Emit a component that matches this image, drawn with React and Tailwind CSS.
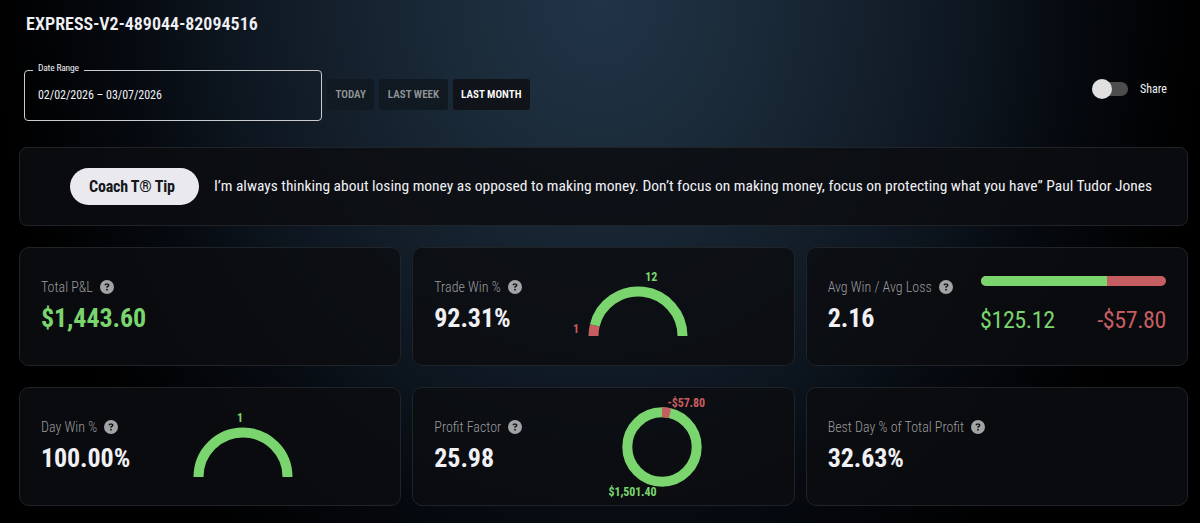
import React from 'react';
import { FaCircleQuestion } from 'react-icons/fa6';

const GREEN = '#7bd56f';
const RED = '#c65d61';

const Card = ({ children }) => (
  <div className="flex h-[119px] rounded-[10px] border border-[#202328] bg-[#0c0d10]/85 pl-[21px] pr-[21px]">
    {children}
  </div>
);

const Stat = ({ label, value, className = 'text-[#f0f0f5]' }) => (
  <div className="shrink-0 pt-[29px]">
    <div className="flex h-5 items-center gap-[7px]">
      <span className="whitespace-nowrap text-[14px] font-light text-[#9a9b9e]">{label}</span>
      <FaCircleQuestion className="h-[14px] w-[14px] text-[#a2a3a4]" />
    </div>
    <div className={`mt-1 text-[26px] font-bold leading-[34px] tracking-[-0.1px] ${className}`}>{value}</div>
  </div>
);

const point = (cx, cy, r, deg) => {
  const a = (deg * Math.PI) / 180;
  return `${cx - r * Math.cos(a)} ${cy - r * Math.sin(a)}`;
};

// half ring, losses first from the left
const Gauge = ({ wins, losses }) => {
  const split = (losses / (wins + losses)) * 180;
  const cx = 70;
  const cy = 70;
  const mid = split + (180 - split) / 2;
  const rad = (mid * Math.PI) / 180;
  return (
    <svg width="140" height="74" className="shrink-0 text-[12px] font-bold">
      {losses > 0 && (
        <path d={`M${point(cx, cy, 44.5, 0)}A44.5 44.5 0 0 1 ${point(cx, cy, 44.5, split)}`} stroke={RED} strokeWidth="10" fill="none" />
      )}
      <path d={`M${point(cx, cy, 44.5, split)}A44.5 44.5 0 0 1 ${point(cx, cy, 44.5, 180)}`} stroke={GREEN} strokeWidth="10" fill="none" />
      <text x={cx - 60 * Math.cos(rad) + (losses ? 6 : -3)} y="15" textAnchor="middle" fill={GREEN}>{wins}</text>
      {losses > 0 && <text x="8" y="67" textAnchor="middle" fill={RED}>{losses}</text>}
    </svg>
  );
};

const Donut = () => (
  <svg width="120" height="112" className="shrink-0 text-[12px] font-bold">
    <circle cx="60" cy="56" r="34.7" stroke={GREEN} strokeWidth="10" fill="none" />
    <path d="M60 21.3A34.7 34.7 0 0 1 68 22.2" stroke={RED} strokeWidth="10" fill="none" />
    <text x="65.5" y="16" textLength="37.5" fill={RED}>-$57.80</text>
    <text x="6.5" y="104.5" textLength="48" fill={GREEN}>$1,501.40</text>
  </svg>
);

const ranges = ['TODAY', 'LAST WEEK', 'LAST MONTH'];

const App = () => {
  return (
    <div className="h-[523px] w-[1200px] overflow-hidden bg-black bg-[radial-gradient(ellipse_600px_680px_at_600px_0px,#203447_0%,#1a2937_28%,#0e1721_60%,#05080d_82%,#000_100%)] pl-[19px] pr-[12px] font-['Roboto_Condensed','Roboto',sans-serif] text-[#f0f0f5] [font-stretch:75%]">
      <h1 className="pl-[7px] pt-[11px] text-[18px] font-semibold leading-[26px] tracking-[0.02px]">EXPRESS-V2-489044-82094516</h1>

      <div className="flex items-start pl-[5px] pt-[26px]">
        <fieldset className="h-[58px] w-[298px] rounded-[4px] border border-[#c9cbce] pl-[8px]">
          <legend className="h-[14px] px-[5px] text-[9.5px] leading-[10px] tracking-[-0.2px]">Date Range</legend>
          <div className="pl-[5px] pt-[10px] text-[12px] leading-4 tracking-[-0.05px]">02/02/2026 – 03/07/2026</div>
        </fieldset>
        <div className="ml-[5px] mt-[16px] flex gap-[5px]">
          {ranges.map((r) => (
            <button
              key={r}
              className={`h-[31px] rounded-[3px] px-[8.5px] pt-[2px] text-[11px] font-semibold tracking-[0.02px] ${r === 'LAST MONTH' ? 'bg-[#101319] text-white' : 'bg-[#111a22] text-[#919599]'}`}
            >
              {r}
            </button>
          ))}
        </div>
        <div className="ml-auto mr-[21px] mt-[14px] flex h-[24px] items-center">
          <div className="flex h-[14px] w-[36px] items-center rounded-full bg-[#4d4d4d]">
            <span className="h-5 w-5 shrink-0 rounded-full bg-[#e0e0e0]"></span>
          </div>
          <span className="ml-[12px] text-[12px]">Share</span>
        </div>
      </div>

      <div className="mt-[26px] flex h-[79px] items-center rounded-[8px] border border-[#202328] bg-[#0c0d10]/85 pl-[50px]">
        <span className="flex h-[37px] w-[129px] shrink-0 items-center whitespace-nowrap rounded-full bg-[#e9e9ee] pl-[19px] text-[16px] font-bold tracking-[-0.2px] text-[#15171c]">Coach T® Tip</span>
        <p className="ml-[15px] whitespace-nowrap text-[15.5px] tracking-[-0.01px]">
          I’m always thinking about losing money as opposed to making money. Don’t focus on making money, focus on protecting what you have” Paul Tudor Jones
        </p>
      </div>

      <div className="mt-[21px] grid grid-cols-3 gap-x-[11px] gap-y-[21px]">
        <Card>
          <Stat label="Total P&L" value="$1,443.60" className="text-[#7bd56f]" />
        </Card>
        <Card>
          <Stat label="Trade Win %" value="92.31%" />
          <div className="ml-[46.5px] pt-[18px]">
            <Gauge wins={12} losses={1} />
          </div>
        </Card>
        <Card>
          <Stat label="Avg Win / Avg Loss" value="2.16" />
          <div className="ml-auto w-[185px] pt-[28px]">
            <div className="flex h-[10px] overflow-hidden rounded-full bg-[#c65d61]">
              <div className="w-[126px] bg-[#7bd56f]"></div>
            </div>
            <div className="mt-[17px] flex justify-between text-[24px] leading-[34px] tracking-[-0.4px]">
              <span className="-ml-px text-[#7bd56f]">$125.12</span>
              <span className="text-[#c65d61]">-$57.80</span>
            </div>
          </div>
        </Card>
        <Card>
          <Stat label="Day Win %" value="100.00%" />
          <div className="ml-[42.5px] pt-[19px]">
            <Gauge wins={1} losses={0} />
          </div>
        </Card>
        <Card>
          <Stat label="Profit Factor" value="25.98" />
          <div className="ml-[80px] pt-[3px]">
            <Donut />
          </div>
        </Card>
        <Card>
          <Stat label="Best Day % of Total Profit" value="32.63%" />
        </Card>
      </div>
    </div>
  );
};

export default App;
